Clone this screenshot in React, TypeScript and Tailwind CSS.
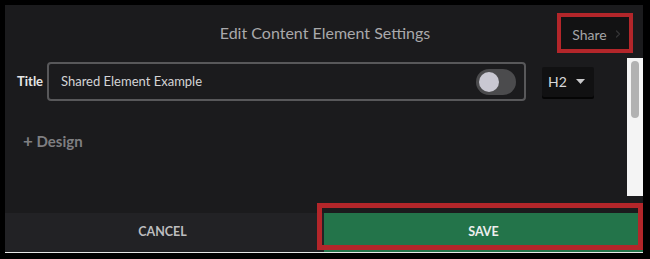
import { ChevronRight } from "lucide-react";

function Toggle() {
  return (
    <div className="flex h-[26px] w-[40px] shrink-0 items-center rounded-full bg-[#4b4b4d] px-[3px]">
      <div className="h-[20px] w-[20px] rounded-full bg-[#c9c8d2]" />
    </div>
  );
}

export default function App() {
  return (
    <div
      className="relative h-[259px] w-[650px] bg-black pl-[5px] pr-[7px] pt-[5px]"
      style={{ fontFamily: "Lato, 'Open Sans', sans-serif" }}
    >
      <div className="flex h-[247px] flex-col bg-[#1b1b1d]">
        {/* header */}
        <div className="relative flex h-[52px] shrink-0 items-center justify-center">
          <span className="pl-[2px] pt-[3px] text-[16px] text-[#a9a9ab]">Edit Content Element Settings</span>
          <button className="absolute right-[10px] top-[8px] flex h-[40px] w-[76px] items-center justify-center gap-[5px] border-4 border-[#b3262a] bg-[#121213] pl-[6px] pt-[2px] text-[14px] text-[#a5a5a7]">
            Share
            <ChevronRight size={12} strokeWidth={2.5} className="text-[#343436]" />
          </button>
        </div>

        {/* body */}
        <div className="flex flex-1">
          <div className="flex flex-1 flex-col pl-[12px] pt-[5px]">
            <div className="flex items-center">
              <span className="w-[30px] text-[13px] font-bold text-[#e6e6e6]">Title</span>
              <div className="flex h-[39px] w-[479px] items-center justify-between rounded-[4px] border-2 border-[#58585a] pl-[12px] pr-[8px]">
                <span className="text-[13px] text-[#d4d4d6]">Shared Element Example</span>
                <Toggle />
              </div>
              <div className="ml-[16px] flex h-[30px] w-[52px] items-center justify-between rounded-[2px] bg-[#111112] pl-[6px] pr-[9px] shadow-[0_2px_0_#050505]">
                <span className="text-[14px] text-[#d8d8da]">H2</span>
                <svg width="9" height="5" viewBox="0 0 9 5">
                  <path d="M0 0h9L4.5 5z" fill="#c9c9cb" />
                </svg>
              </div>
            </div>
            <div className="mt-[27px] pl-[6px] text-[15px] font-bold text-[#7f7f82]">
              <span className="text-[17px]">+</span> Design
            </div>
          </div>
          <div className="mt-[1px] h-[138px] w-[16px] shrink-0 bg-[#f4f4f4] px-[4px] pt-[3px]">
            <div className="h-[57px] w-[8px] rounded-full bg-[#b2b2b2]" />
          </div>
        </div>

        {/* footer */}
        <div className="grid h-[39px] shrink-0 grid-cols-2">
          <div className="flex items-center justify-center bg-[#222225] pr-[4px] text-[12.5px] font-bold text-[#bdbdbf]">
            CANCEL
          </div>
          <div className="flex items-center justify-center bg-[#23744a] text-[12.5px] font-bold text-[#eeeeee]">
            SAVE
          </div>
        </div>
      </div>
      <div className="h-[1px] w-[638px] bg-[#e8e8e8]" />

      {/* annotation highlight around save */}
      <div className="pointer-events-none absolute left-[317px] top-[203px] h-[47px] w-[326px] border-[5px] border-[#b3262a]" />
    </div>
  );
}
